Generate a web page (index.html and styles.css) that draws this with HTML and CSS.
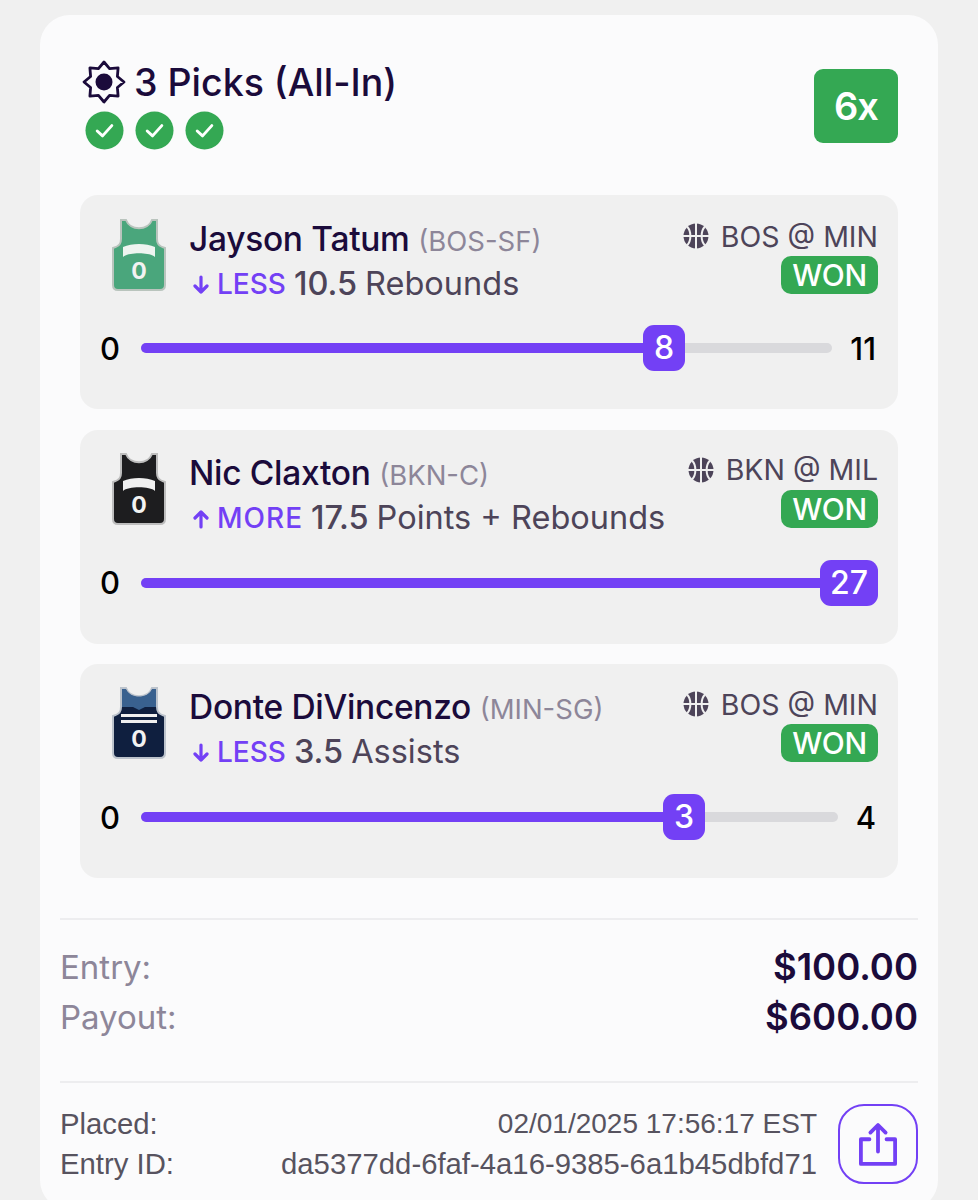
FILE: index.html
```html
<!DOCTYPE html>
<html>
  <head>
    <meta charset="utf-8">
    <title>entry</title>
    <link rel="stylesheet" href="styles.css">
  </head>
<body>
	<svg class="defs" width="0" height="0">
		<symbol id="ball" viewBox="0 0 26 26">
			<circle cx="13" cy="13" r="12.5" fill="#4d4459"/>
			<path d="M13 0V26M0 13H26M4 3.5C8.5 8 8.5 18 4 22.5M22 3.5C17.500 8 17.500 18 22 22.500" fill="none" stroke="#f0f0f0" stroke-width="2"/>
		</symbol>
		<symbol id="check" viewBox="0 0 40 40">
			<circle cx="20" cy="20" r="19.500" fill="#34a853"/>
			<path d="M12.500 20.500L18 25.500L27.500 15" fill="none" stroke="#fff" stroke-width="3" stroke-linecap="round" stroke-linejoin="round"/>
		</symbol>
		<symbol id="down" viewBox="0 0 16 20">
			<path d="M8 2V17M2 11L8 17L14 11" fill="none" stroke="#7340f5" stroke-width="3.200" stroke-linecap="round" stroke-linejoin="round"/>
		</symbol>
		<symbol id="up" viewBox="0 0 16 20">
			<path d="M8 18V3M2 9L8 3L14 9" fill="none" stroke="#7340f5" stroke-width="3.200" stroke-linecap="round" stroke-linejoin="round"/>
		</symbol>
	</svg>

	<div class="entry">
		<!-- header -->
		<div class="head">
			<div>
				<div class="title">
					<svg class="burst" viewBox="0 0 44 44">
						<path d="M22 2L27.550 8.600L36.100 7.900L35.400 16.450L42 22L35.400 27.550L36.100 36.100L27.550 35.400L22 42L16.450 35.400L7.900 36.100L8.600 27.550L2 22L8.600 16.450L7.900 7.900L16.450 8.600Z" fill="none" stroke="#1b0b3b" stroke-width="2.800" stroke-linejoin="round"/>
						<circle cx="22" cy="22" r="8.500" fill="#1b0b3b"/>
					</svg>
					<span>3 Picks (All-In)</span>
				</div>
				<div class="checks">
					<svg><use href="#check"/></svg>
					<svg><use href="#check"/></svg>
					<svg><use href="#check"/></svg>
				</div>
			</div>
			<div class="multi">6x</div>
		</div>

		<!-- pick one -->
		<div class="pick">
			<div class="pickTop">
				<svg class="jersey" viewBox="0 0 54 74">
					<path d="M9 1H14C18 12 36 12 40 1H45V20C45 24 46 27 53 29V66C53 69 51 71 48 71H6C3 71 1 69 1 66V29C8 27 9 24 9 20Z" fill="#4aa67c" stroke="#b9c4bd" stroke-width="2"/>
					<path d="M11 28C20 24 34 24 43 28V38C38 33 16 33 11 38Z" fill="#eef4f0"/>
					<text x="27" y="60" class="jerseyNum">0</text>
				</svg>
				<div class="info">
					<div class="name">Jayson Tatum <span class="team">(BOS-SF)</span></div>
					<div class="line">
						<svg class="arrow"><use href="#down"/></svg>
						<span class="dir">LESS</span> <span class="val">10.5</span> Rebounds
					</div>
				</div>
				<div class="status">
					<div class="game"><svg class="ball"><use href="#ball"/></svg>BOS @ MIN</div>
					<div class="won">WON</div>
				</div>
			</div>
			<div class="slider">
				<span class="min">0</span>
				<div class="track">
					<div class="fill" style="width: 544px"><span class="thumb">8</span></div>
				</div>
				<span class="max">11</span>
			</div>
		</div>

		<!-- pick two -->
		<div class="pick">
			<div class="pickTop">
				<svg class="jersey" viewBox="0 0 54 74">
					<path d="M9 1H14C18 12 36 12 40 1H45V20C45 24 46 27 53 29V66C53 69 51 71 48 71H6C3 71 1 69 1 66V29C8 27 9 24 9 20Z" fill="#1d1d1f" stroke="#bdbdbd" stroke-width="2"/>
					<path d="M11 28C20 24 34 24 43 28V38C38 33 16 33 11 38Z" fill="#f0f0f0"/>
					<text x="27" y="60" class="jerseyNum">0</text>
				</svg>
				<div class="info">
					<div class="name">Nic Claxton <span class="team">(BKN-C)</span></div>
					<div class="line">
						<svg class="arrow"><use href="#up"/></svg>
						<span class="dir dirMore">MORE</span> <span class="val">17.5</span> Points + Rebounds
					</div>
				</div>
				<div class="status">
					<div class="game"><svg class="ball"><use href="#ball"/></svg>BKN @ MIL</div>
					<div class="won">WON</div>
				</div>
			</div>
			<div class="slider">
				<span class="min">0</span>
				<div class="track trackFull">
					<div class="fill" style="width: 737px"><span class="thumb">27</span></div>
				</div>
			</div>
		</div>

		<!-- pick three -->
		<div class="pick">
			<div class="pickTop">
				<svg class="jersey" viewBox="0 0 54 74">
					<path d="M9 1H14C18 12 36 12 40 1H45V20C45 24 46 27 53 29V66C53 69 51 71 48 71H6C3 71 1 69 1 66V29C8 27 9 24 9 20Z" fill="#0f1f3f" stroke="#bcc3cc" stroke-width="2"/>
					<path d="M10 2H14C18 12 36 12 40 2H44V20H33L27 23L21 20H10Z" fill="#39618f"/>
					<path d="M9 27H45V30H9ZM9 33H45V36H9Z" fill="#f0f0f0"/>
					<text x="27" y="60" class="jerseyNum">0</text>
				</svg>
				<div class="info">
					<div class="name">Donte DiVincenzo <span class="team">(MIN-SG)</span></div>
					<div class="line">
						<svg class="arrow"><use href="#down"/></svg>
						<span class="dir">LESS</span> <span class="val">3.5</span> Assists
					</div>
				</div>
				<div class="status">
					<div class="game"><svg class="ball"><use href="#ball"/></svg>BOS @ MIN</div>
					<div class="won">WON</div>
				</div>
			</div>
			<div class="slider">
				<span class="min">0</span>
				<div class="track trackLong">
					<div class="fill" style="width: 564px"><span class="thumb">3</span></div>
				</div>
				<span class="max">4</span>
			</div>
		</div>

		<!-- money -->
		<div class="money">
			<div class="moneyRow"><span>Entry:</span><b>$100.00</b></div>
			<div class="moneyRow"><span>Payout:</span><b>$600.00</b></div>
		</div>

		<!-- bottom -->
		<div class="foot">
			<div class="meta">
				<div class="metaRow"><span>Placed:</span><span class="date">02/01/2025 17:56:17 EST</span></div>
				<div class="metaRow"><span>Entry ID:</span><span>da5377dd-6faf-4a16-9385-6a1b45dbfd71</span></div>
			</div>
			<div class="share">
				<svg viewBox="0 0 40 46">
					<path d="M11 18H2V44H38V18H29" fill="none" stroke="#7340f5" stroke-width="4" stroke-linecap="round" stroke-linejoin="round"/>
					<path d="M20 31V4M12 11L20 3L28 11" fill="none" stroke="#7340f5" stroke-width="4" stroke-linecap="round" stroke-linejoin="round"/>
				</svg>
			</div>
		</div>
	</div>
</body>
</html>
```

FILE: styles.css
```css
html, body {
	margin: 0;
	height: 1200px;
	overflow: hidden;
	background: #f0f0f0;
}
body {
	font-family: "Inter", "Liberation Sans", sans-serif;
	color: #1b0b3b;
}
.defs {
	display: block;
	height: 0;
}
.entry {
	box-sizing: border-box;
	width: 898px;
	height: 1195px;
	margin: 15px 0 0 40px;
	padding: 0 40px;
	background: #fbfbfc;
	border-radius: 30px;
}
.head {
	display: flex;
	justify-content: space-between;
	height: 180px;
	padding-top: 44px;
	box-sizing: border-box;
}
.title {
	display: flex;
	align-items: center;
	gap: 8px;
	height: 46px;
	margin-left: 2px;
	font-size: 37.500px;
	font-weight: 500;
}
.burst {
	width: 44px;
	height: 44px;
}
.checks {
	display: flex;
	gap: 11px;
	margin: 6px 0 0 5px;
}
.checks svg {
	width: 39px;
	height: 39px;
}
.multi {
	width: 84px;
	height: 74px;
	margin-top: 10px;
	background: #34a853;
	border-radius: 9px;
	color: #fff;
	font-size: 38px;
	font-weight: 600;
	letter-spacing: -1px;
	line-height: 74px;
	text-align: center;
}
.pick {
	box-sizing: border-box;
	height: 214px;
	margin-bottom: 20.500px;
	padding: 21px 20px 0 20px;
	background: #f0f0f0;
	border-radius: 18px;
}
.pick + .pick {
	padding-top: 20px;
}
.pickTop {
	display: flex;
	height: 99px;
}
.pick + .pick .pickTop {
	height: 100px;
}
.jersey {
	flex: none;
	width: 54px;
	height: 74px;
	margin: 3px 23px 0 12px;
}
.jerseyNum {
	fill: #f2f2f2;
	font-size: 23px;
	font-weight: 700;
	text-anchor: middle;
}
.info {
	flex: 1;
	white-space: nowrap;
}
.name {
	font-size: 33.500px;
	font-weight: 500;
	line-height: 46px;
	letter-spacing: -0.3px;
}
.team {
	color: #8d8699;
	font-size: 27.500px;
	font-weight: 400;
	letter-spacing: 0;
}
.line {
	display: flex;
	align-items: center;
	gap: 8px;
	color: #4d4459;
	font-size: 32.500px;
	line-height: 40px;
}
.arrow {
	width: 16px;
	height: 20px;
	margin: 2px 0 0 4px;
}
.dir {
	color: #7340f5;
	font-size: 28px;
	font-weight: 500;
}
.dirMore {
	letter-spacing: 1px;
}
.val {
	font-weight: 500;
}
.status {
	display: flex;
	flex-direction: column;
	align-items: flex-end;
	white-space: nowrap;
}
.game {
	display: flex;
	align-items: center;
	gap: 12px;
	height: 40px;
	color: #4d4459;
	font-size: 28.500px;
}
.ball {
	width: 26px;
	height: 26px;
}
.won {
	width: 97px;
	height: 38px;
	background: #34a853;
	border-radius: 10px;
	color: #fff;
	font-size: 30px;
	font-weight: 500;
	letter-spacing: -0.3px;
	line-height: 38px;
	text-align: center;
}
.slider {
	display: flex;
	align-items: center;
	height: 46px;
	margin-top: 10px;
	color: #000;
	font-size: 31px;
	font-weight: 500;
}
.min {
	width: 41px;
}
.max {
	margin-left: auto;
	padding-right: 2px;
}
.track {
	flex: none;
	width: 691px;
	height: 10px;
	background: #d9d9dc;
	border-radius: 5px;
}
.trackFull {
	width: 700px;
}
.trackLong {
	width: 697px;
}
.fill {
	position: relative;
	height: 10px;
	background: #7340f5;
	border-radius: 5px;
}
.thumb {
	position: absolute;
	top: -18px;
	right: 0;
	min-width: 42px;
	height: 46px;
	padding: 0 10px;
	box-sizing: border-box;
	background: #7340f5;
	border-radius: 11px;
	color: #fff;
	font-size: 32px;
	line-height: 46px;
	text-align: center;
}
.money {
	margin: 40px -20px 0;
	padding-top: 22px;
	height: 165px;
	box-sizing: border-box;
	border-top: 2px solid #ededef;
	border-bottom: 2px solid #ededef;
}
.moneyRow {
	display: flex;
	justify-content: space-between;
	align-items: center;
	height: 50px;
	color: #8d8699;
	font-size: 33px;
}
.moneyRow b {
	color: #1b0b3b;
	font-size: 36.500px;
	font-weight: 600;
}
.foot {
	display: flex;
	align-items: center;
	gap: 21px;
	margin: 21px -20px 0;
	font-family: "Liberation Sans", sans-serif;
	font-size: 29.300px;
	color: #57535f;
}
.meta {
	flex: 1;
}
.metaRow {
	display: flex;
	justify-content: space-between;
	height: 40px;
	line-height: 40px;
}
.date {
	font-size: 28px;
}
.share {
	display: flex;
	align-items: center;
	justify-content: center;
	box-sizing: border-box;
	width: 80px;
	height: 80px;
	border: 2px solid #7340f5;
	border-radius: 26px;
}
.share svg {
	width: 38px;
	height: 44px;
}
```
